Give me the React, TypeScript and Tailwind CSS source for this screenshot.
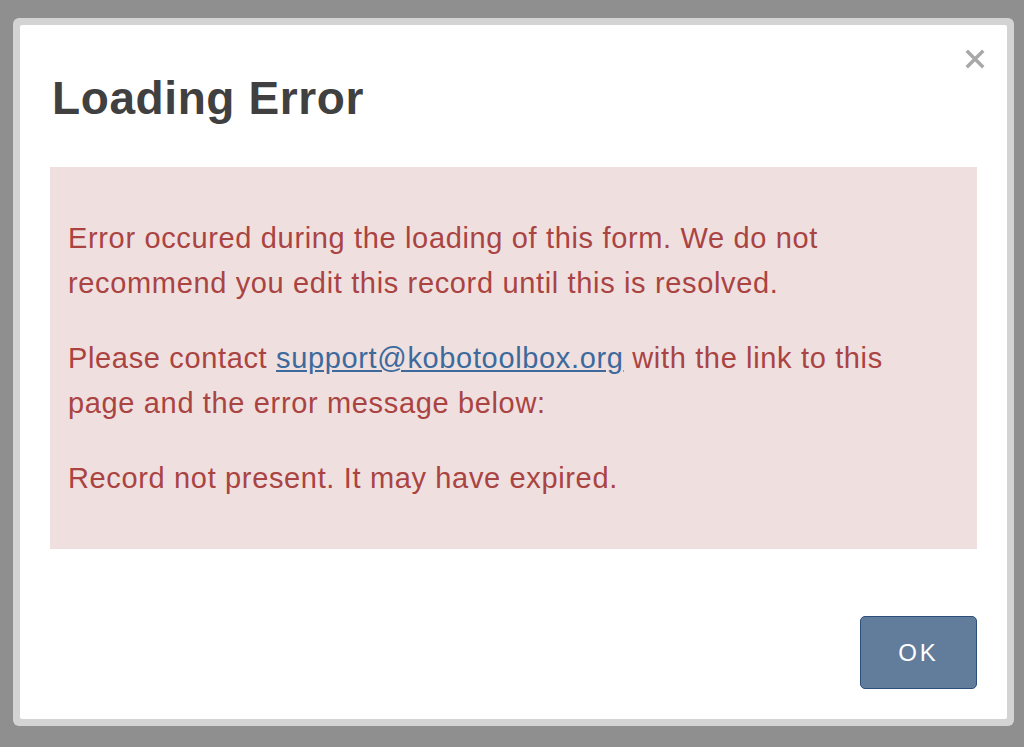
export default function App() {
  return (
    <div
      className="w-[1024px] h-[747px] bg-[#8f8f8f] pt-[18px] pl-[13px]"
      style={{ fontFamily: '"Liberation Sans", Arial, sans-serif' }}
    >
      <div className="w-[1001px] h-[708px] rounded-[6px] bg-[#d3d3d3] p-[7px]">
        <div className="relative h-full bg-white rounded-[2px] px-[30px] pt-[50px]">
          {/* close */}
          <button className="absolute right-[21px] top-[23px] text-[#a8a8a8]">
            <svg width="22" height="22" viewBox="0 0 24 24">
              <path
                d="M3 3 L21 21 M21 3 L3 21"
                stroke="currentColor"
                strokeWidth="3.8"
                strokeLinecap="butt"
              />
            </svg>
          </button>

          <h1 className="ml-[2px] text-[46px] font-bold text-[#404040] leading-none tracking-[0.6px]">
            Loading Error
          </h1>

          <div className="mt-[46px] bg-[#f0dfdf] text-[#a94442] text-[29px] leading-[45px] tracking-[0.65px] pl-[18px] pr-[10px] pt-[49px] pb-[48px]">
            <p className="mb-[30px]">
              Error occured during the loading of this form. We do not
              <br />
              recommend you edit this record until this is resolved.
            </p>
            <p className="mb-[30px]">
              Please contact{" "}
              <a href="#" className="text-[#3c6a9c] underline">
                support@kobotoolbox.org
              </a>{" "}
              with the link to this
              <br />
              page and the error message below:
            </p>
            <p>Record not present. It may have expired.</p>
          </div>

          <div className="flex justify-end mt-[67px]">
            <button className="w-[117px] h-[73px] rounded-[5px] bg-[#627c9b] border border-[#2d4f7c] text-white text-[24px] tracking-[3px]">
              OK
            </button>
          </div>
        </div>
      </div>
    </div>
  );
}
